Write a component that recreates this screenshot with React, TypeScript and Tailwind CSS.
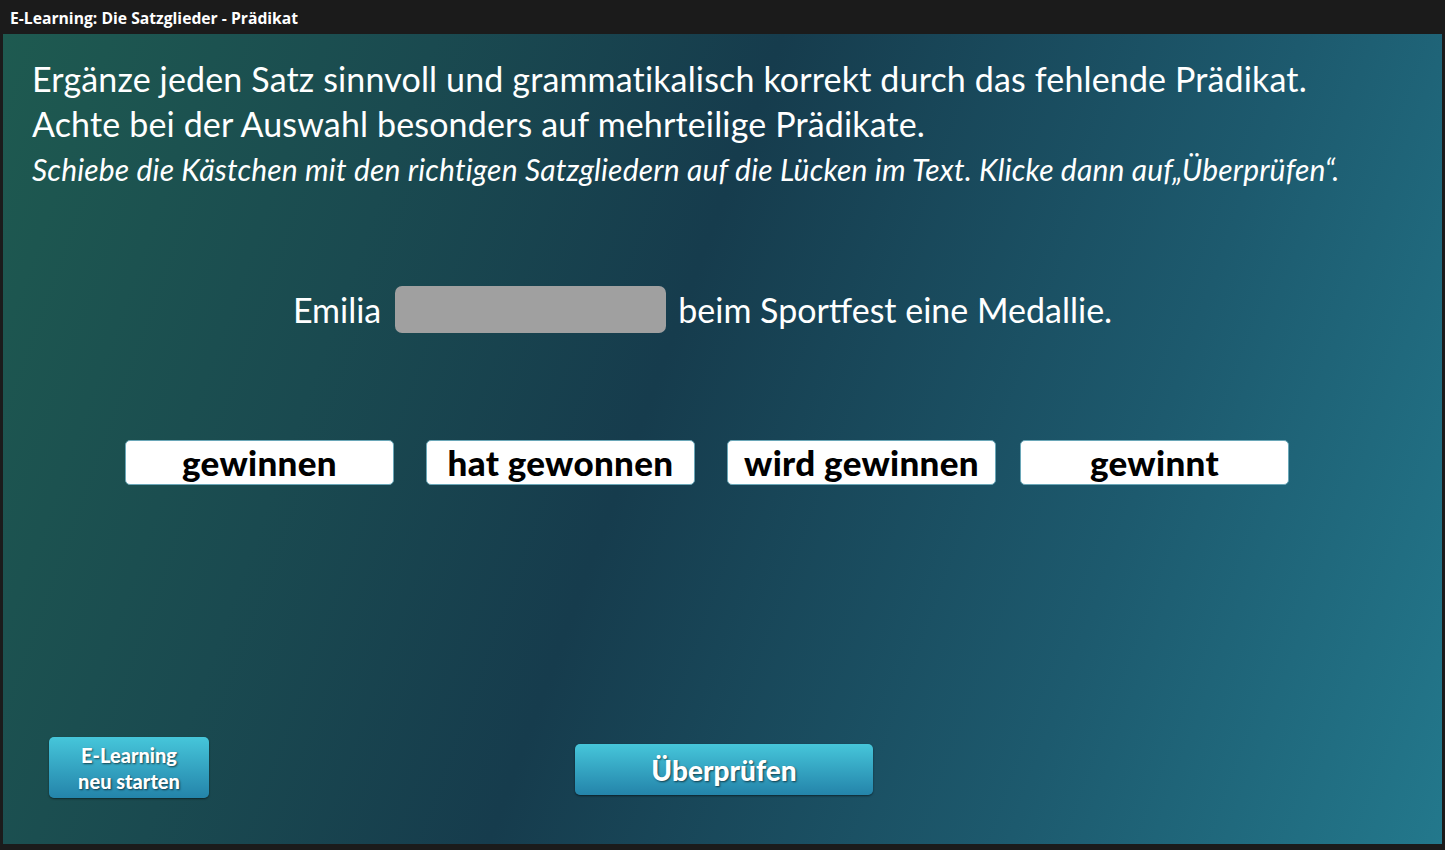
import React from "react";

export default function App() {
  const words = ["gewinnen", "hat gewonnen", "wird gewinnen", "gewinnt"];
  return (
    <div className="w-[1445px] h-[850px] bg-[#1b1b1b] flex flex-col overflow-hidden" style={{ fontFamily: "Lato, 'Open Sans', sans-serif" }}>
      <div className="h-[34px] flex items-center pl-[10px] pt-[3px] text-white text-[15.7px] font-bold" style={{ fontFamily: "'Open Sans', sans-serif" }}>
        E-Learning: Die Satzglieder - Prädikat
      </div>
      <div className="mx-[3px] h-[810px] bg-[linear-gradient(110deg,#1e5a50_0%,#1a4a50_25%,#163c4d_45%,#1d5a6e_75%,#23788c_100%)] flex flex-col">
        <div className="pl-[29px] pt-[22px] text-white">
          <p className="text-[34px] leading-[45px] tracking-[0.15px]">Ergänze jeden Satz sinnvoll und grammatikalisch korrekt durch das fehlende Prädikat.</p>
          <p className="text-[34px] leading-[45px] tracking-[0.15px]">Achte bei der Auswahl besonders auf mehrteilige Prädikate.</p>
          <p className="text-[30px] leading-[46px] italic tracking-[0.17px]">Schiebe die Kästchen mit den richtigen Satzgliedern auf die Lücken im Text. Klicke dann auf„Überprüfen“.</p>
        </div>
        <div className="mt-[92px] flex items-center justify-center text-white text-[34px] pr-[40px]">
          <span>Emilia</span>
          <div className="ml-[14px] mr-[12px] w-[271px] h-[47px] rounded-[7px] bg-[#a0a0a0]" />
          <span>beim Sportfest eine Medallie.</span>
        </div>
        <div className="mt-[105px] flex pl-[122px] gap-[32px]">
          {words.map((w, i) => (
            <div key={w} className={`w-[269px] h-[45px] rounded-[5px] bg-white flex items-center justify-center text-black font-black text-[35px] tracking-[0.3px] border border-[#6aa7b8] ${i === 3 ? "ml-[-8px]" : ""}`}>
              {w}
            </div>
          ))}
        </div>
        <div className="mt-[252px] flex items-start">
          <button className="ml-[46px] w-[160px] h-[61px] rounded-[5px] bg-gradient-to-b from-[#46c6da] to-[#2484aa] text-white font-black text-[20px] leading-[26px] shadow-[0_1px_2px_rgba(0,0,0,0.5)] [text-shadow:1px_1px_2px_rgba(0,0,0,0.6)]">
            E-Learning<br />neu starten
          </button>
          <button className="ml-[366px] mt-[7px] w-[298px] h-[51px] rounded-[5px] bg-gradient-to-b from-[#46c6da] to-[#2484aa] text-white font-black text-[28px] shadow-[0_1px_2px_rgba(0,0,0,0.5)] [text-shadow:1px_1px_2px_rgba(0,0,0,0.6)]">
            Überprüfen
          </button>
        </div>
      </div>
    </div>
  );
}
